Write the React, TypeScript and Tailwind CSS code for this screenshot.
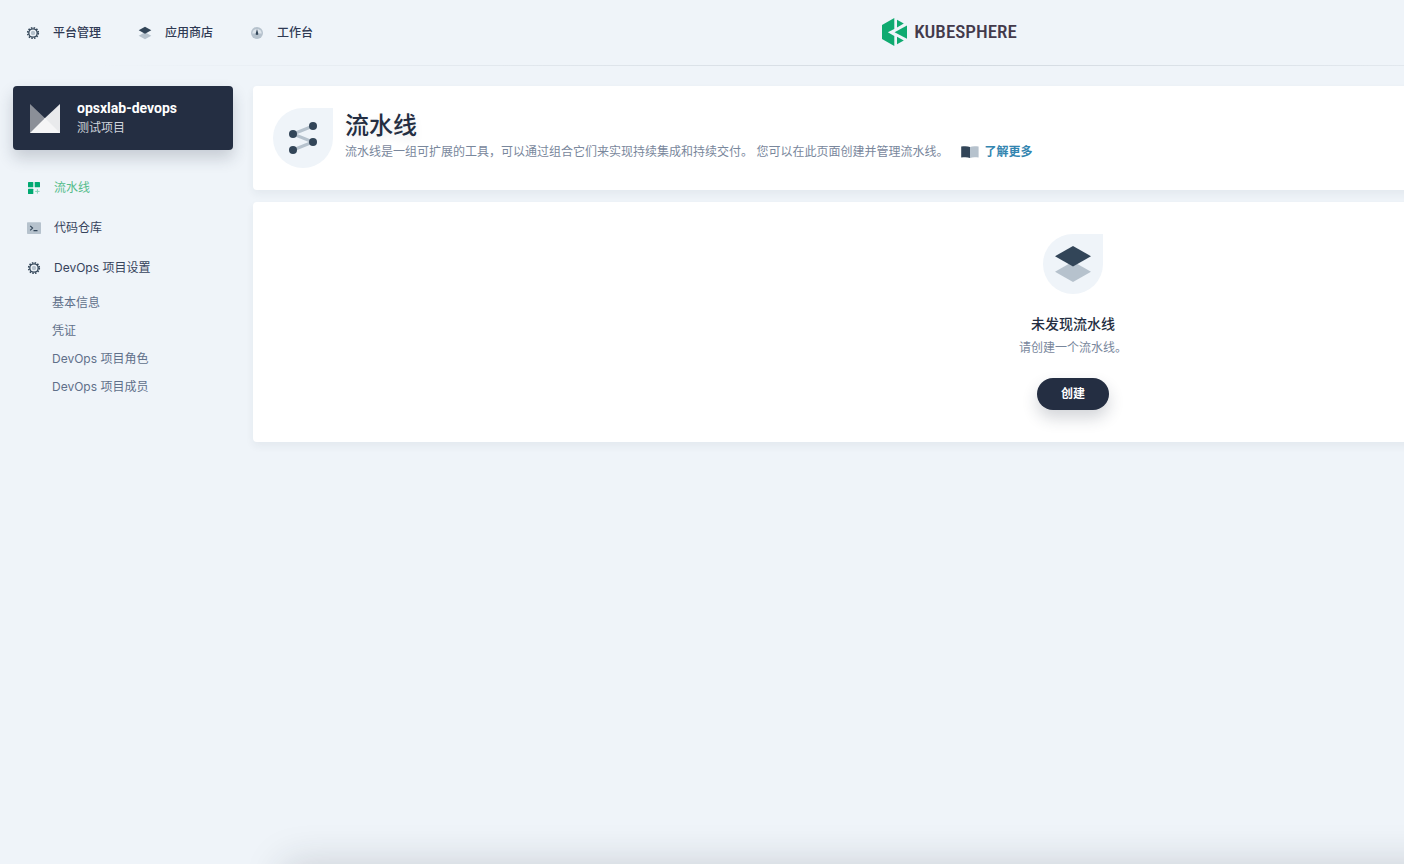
import React from "react";

type IconProps = { className?: string };

const GearIcon = ({ className }: IconProps) => (
  <svg viewBox="0 0 16 16" className={className} aria-hidden="true">
    <circle cx="8" cy="8" r="5.3" fill="none" stroke="#324558" strokeWidth="1.6" strokeDasharray="1.5 1.275" />
    <circle cx="8" cy="8" r="4.2" fill="#eff4f9" stroke="#324558" strokeWidth="1.3" />
    <circle cx="8" cy="8" r="2.2" fill="#b6c2cd" />
  </svg>
);

const LayersIcon = ({ className }: IconProps) => (
  <svg viewBox="0 0 40 40" className={className} aria-hidden="true">
    <path d="M2 27.8 20 17.6l18 10.2L20 38z" fill="#b6c2cd" />
    <path d="M2 12.2 20 2l18 10.2L20 22.4z" fill="#324558" />
  </svg>
);

const GaugeIcon = ({ className }: IconProps) => (
  <svg viewBox="0 0 16 16" className={className} aria-hidden="true">
    <circle cx="8" cy="8" r="6" fill="#b6c2cd" />
    <path d="M3.3 8.6a4.7 4.7 0 0 1 9.4 0z" fill="#dde4eb" />
    <path d="M8 4 9.2 8.3a1.3 1.3 0 1 1-2.4 0z" fill="#324558" />
  </svg>
);

const GridPlusIcon = ({ className }: IconProps) => (
  <svg viewBox="0 0 16 16" className={className} aria-hidden="true">
    <g fill="#00a971">
      <rect x="2" y="2" width="5.3" height="5.3" rx=".6" />
      <rect x="8.7" y="2" width="5.3" height="5.3" rx=".6" />
      <rect x="2" y="8.7" width="5.3" height="5.3" rx=".6" />
    </g>
    <path d="M11.4 9.2v4.4M9.2 11.4h4.4" stroke="#7fd3b6" strokeWidth="1" />
  </svg>
);

const TerminalIcon = ({ className }: IconProps) => (
  <svg viewBox="0 0 16 16" className={className} aria-hidden="true">
    <rect x="1" y="2.2" width="14" height="11.8" rx=".8" fill="#b6c2cd" />
    <path d="M4.2 5.8 6.6 8.1 4.2 10.4M7.5 10.6h4" fill="none" stroke="#324558" strokeWidth="1.1" />
  </svg>
);

const PipelineIcon = ({ className }: IconProps) => (
  <svg viewBox="0 0 40 40" className={className} aria-hidden="true">
    <path d="M30 8 10 16l20 8-20 8" fill="none" stroke="#b6c2cd" strokeWidth="3" />
    <g fill="#324558">
      <circle cx="30" cy="8" r="4" />
      <circle cx="10" cy="16" r="4" />
      <circle cx="30" cy="24" r="4" />
      <circle cx="10" cy="32" r="4" />
    </g>
  </svg>
);

const BookIcon = ({ className }: IconProps) => (
  <svg viewBox="0 0 20 16" className={className} aria-hidden="true">
    <path d="M10 3c2-.9 5-.9 8.600-.5v11C15 13.1 12 13.1 10 14z" fill="#b6c2cd" />
    <path d="M1.2 2.5C5 2.1 8 2.1 10 3v11c-2-.9-5-.9-8.800-.5z" fill="#324558" />
  </svg>
);

const BrandMark = ({ className }: IconProps) => (
  <svg viewBox="0 0 25 28" className={className} aria-hidden="true">
    <g fill="#0faa70">
      <path d="M12.3 0v11L5.8 14.3l6.5 3.8V28L0 21V7z" />
      <path d="M15 1.8 21.8 5.5 15 9.5z" />
      <path d="M25 7.6v13.2L12.6 14.2z" />
      <path d="M15 18.8 21.8 22.5 15 26.3z" />
    </g>
  </svg>
);

const ProjectMark = ({ className }: IconProps) => (
  <svg viewBox="0 0 30 30" className={className} aria-hidden="true">
    <path d="M0 1v29h2L15 15.2z" fill="#8b8f98" />
    <path d="M30 1v29h-2L14 16z" fill="#e9eaec" />
    <path d="M0 30 15 15 30 30z" fill="#f5f5f6" />
  </svg>
);

const topLinks = [
  { label: "平台管理", Icon: GearIcon, size: "size-4" },
  { label: "应用商店", Icon: LayersIcon, size: "size-4 p-px" },
  { label: "工作台", Icon: GaugeIcon, size: "size-4" },
];

const sideLinks = [
  { label: "流水线", Icon: GridPlusIcon, color: "text-[#55bc8a]" },
  { label: "代码仓库", Icon: TerminalIcon, color: "text-[#36435c]" },
  { label: "DevOps 项目设置", Icon: GearIcon, color: "text-[#36435c]" },
];

const settings = ["基本信息", "凭证", "DevOps 项目角色", "DevOps 项目成员"];

function Header() {
  return (
    <header className="relative grid h-[66px] grid-cols-[1fr_auto_1fr] items-center">
      <nav className="flex gap-9 pl-[25px] text-[#2f3a54]">
        {topLinks.map(({ label, Icon, size }) => (
          <a key={label} href="#" className="flex items-center gap-3 font-medium">
            <Icon className={size} />
            {label}
          </a>
        ))}
      </nav>
      <a href="#" className="flex items-center gap-[7px] pb-[2px]">
        <BrandMark className="h-7 w-[25px]" />
        <span className="font-['Roboto_Condensed','Liberation_Sans_Narrow',sans-serif] text-[19px] leading-7 font-medium text-[#433a4b]">
          KUBESPHERE
        </span>
      </a>
      <div className="absolute inset-x-0 bottom-0 h-px bg-linear-to-r from-transparent from-5% via-[#d3dae1] to-transparent to-95%" />
    </header>
  );
}

function Sidebar() {
  return (
    <aside className="w-[220px] shrink-0">
      <button className="flex h-16 w-full items-center gap-[17px] rounded-sm bg-[#242e42] px-[17px] text-left shadow-[0_8px_16px_rgba(36,46,66,0.2)]">
        <ProjectMark className="size-[30px]" />
        <span className="block">
          <span className="block font-['Roboto'] text-[14px] leading-5 font-bold text-white">opsxlab-devops</span>
          <span className="block leading-5 text-[#d0d4dc]">测试项目</span>
        </span>
      </button>
      <nav className="pt-[18px]">
        <ul>
          {sideLinks.map(({ label, Icon, color }) => (
            <li key={label}>
              <a href="#" className={`flex h-10 items-center gap-3 pl-[13px] ${color}`}>
                <Icon className="size-4" />
                {label}
              </a>
            </li>
          ))}
        </ul>
        <ul className="pt-px pl-[39px] text-[#5f708a]">
          {settings.map((label) => (
            <li key={label}>
              <a href="#" className="flex h-7 items-center">{label}</a>
            </li>
          ))}
        </ul>
      </nav>
    </aside>
  );
}

function Banner() {
  return (
    <section className="flex gap-3 rounded-sm bg-white px-5 py-[22px] shadow-[0_4px_8px_rgba(36,46,66,0.06)]">
      <div className="flex size-[60px] items-center justify-center rounded-full rounded-tr-none bg-[#eff4f9]">
        <PipelineIcon className="size-10" />
      </div>
      <div className="pt-[2px]">
        <h1 className="text-[24px] leading-8 font-medium text-shadow-[0_4px_8px_rgba(36,46,66,0.1)]">流水线</h1>
        <div className="flex items-center text-[#79879c]">
          <p>流水线是一组可扩展的工具，可以通过组合它们来实现持续集成和持续交付。 您可以在此页面创建并管理流水线。</p>
          <a href="#" className="ml-3 flex items-center gap-1 font-bold text-[#3385b0]">
            <BookIcon className="h-4 w-5" />
            了解更多
          </a>
        </div>
      </div>
    </section>
  );
}

function EmptyState() {
  return (
    <section className="flex flex-col items-center rounded-sm bg-white py-8 shadow-[0_4px_8px_rgba(36,46,66,0.06)]">
      <div className="flex size-[60px] items-center justify-center rounded-full rounded-tr-none bg-[#eff4f9]">
        <LayersIcon className="size-10" />
      </div>
      <h2 className="mt-5 text-[14px] leading-5 font-medium">未发现流水线</h2>
      <p className="mt-1 text-[#79879c]">请创建一个流水线。</p>
      <button className="mt-5 h-8 rounded-full bg-[#242e42] px-6 font-semibold text-white shadow-[0_8px_16px_rgba(36,46,66,0.2)]">
        创建
      </button>
    </section>
  );
}

export default function App() {
  return (
    <div className="relative min-h-screen overflow-hidden bg-[#eff4f9] font-['Inter','Noto_Sans_CJK_SC',sans-serif] text-[12px] leading-5 text-[#242e42]">
      <div className="w-[calc(100%+495px)]">
        <Header />
        <div className="flex gap-5 pt-5 pr-[6px] pl-[13px]">
          <Sidebar />
          <main className="flex min-w-0 flex-1 flex-col gap-3">
            <Banner />
            <EmptyState />
          </main>
        </div>
      </div>
      <div className="absolute top-full -right-20 left-[284px] h-16 rounded-sm shadow-[0_0_40px_rgba(36,40,50,0.18)]" />
    </div>
  );
}
